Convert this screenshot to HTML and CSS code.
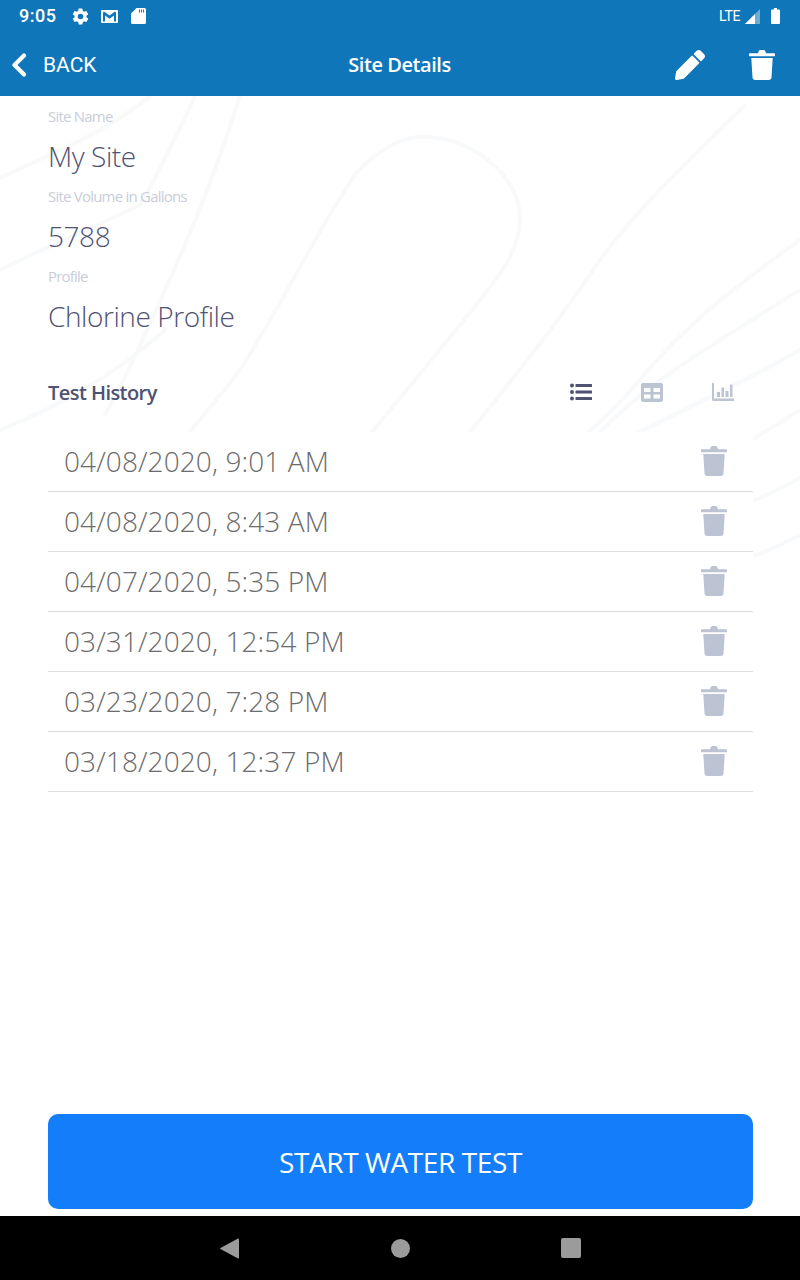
FILE: index.html
```html
<!DOCTYPE html>
<html lang="en">
<head>
<meta charset="utf-8">
<title>Site Details</title>
<link rel="stylesheet" href="styles.css">
</head>
<body>
<svg width="0" height="0" class="defs">
  <symbol id="trash" viewBox="0 0 26 30"><path d="M9 3.2 9.6 1.4C9.9.6 10.6 0 11.5 0h3c.9 0 1.600.6 1.900 1.400L17 3.200h8c.6 0 1 .4 1 1v1.400c0 .4-.3.700-.7.700H.7c-.4 0-.7-.3-.7-.7V4.200c0-.6.400-1 1-1zM2.300 8h21.400l-1.200 19.600c-.1 1.300-1.200 2.400-2.500 2.400H6c-1.300 0-2.400-1.100-2.500-2.400z"/></symbol>
</svg>
<div class="screen">
  <header class="top">
    <div class="status">
      <span class="time">9:05</span>
      <svg class="st-gear" viewBox="0 0 24 24"><path d="M19.400 13c.05-.33.100-.66.100-1s-.05-.67-.100-1l2.100-1.650c.2-.15.250-.42.120-.64l-2-3.460c-.12-.22-.39-.3-.61-.22l-2.490 1c-.52-.4-1.080-.73-1.690-.98l-.38-2.650A.49.490 0 0 0 14 2h-4c-.25 0-.46.180-.49.420l-.38 2.650c-.61.250-1.170.590-1.690.980l-2.490-1c-.23-.09-.49 0-.61.220l-2 3.460c-.13.220-.07.490.12.640L4.600 11c-.05.330-.100.670-.100 1s.05.670.100 1l-2.100 1.650c-.2.150-.25.420-.12.640l2 3.460c.12.220.39.300.61.220l2.490-1c.52.400 1.080.730 1.690.980l.38 2.650c.03.240.24.420.49.420h4c.25 0 .46-.18.49-.42l.38-2.650c.61-.25 1.170-.59 1.690-.98l2.490 1c.23.090.49 0 .61-.22l2-3.460c.12-.22.070-.49-.12-.64zM12 15.500a3.500 3.500 0 1 1 0-7 3.500 3.500 0 0 1 0 7z"/></svg>
      <svg class="st-mail" viewBox="0 0 17 13"><path fill-rule="evenodd" d="M1 0h15a1 1 0 0 1 1 1v11a1 1 0 0 1-1 1H1a1 1 0 0 1-1-1V1a1 1 0 0 1 1-1zm1 2.500V11.500h2V5.500l4.500 3.200 4.500-3.200v6h2V2.500l-1-1-5.500 4-5.500-4z"/></svg>
      <svg class="st-sd" viewBox="0 0 15 16"><path fill-rule="evenodd" d="M5.500 0H13.500A1.500 1.500 0 0 1 15 1.500v13a1.500 1.500 0 0 1-1.500 1.500h-12A1.500 1.500 0 0 1 0 14.500V5.500zM8 1.500v3h1v-3zm2 0v3h1v-3zm2 0v3h1v-3z"/></svg>
      <span class="st-fill"></span>
      <span class="lte">LTE</span>
      <svg class="st-signal" viewBox="0 0 15 15"><path class="dim" d="M15 0v15H0z"/><path d="M10 5v10H0z"/></svg>
      <svg class="st-batt" viewBox="0 0 9 16"><path d="M3 0h3v1.500h2a1 1 0 0 1 1 1V15a1 1 0 0 1-1 1H1a1 1 0 0 1-1-1V2.500a1 1 0 0 1 1-1h2z"/></svg>
    </div>
    <div class="appbar">
      <div class="back">
        <svg class="chev" viewBox="0 0 16 24"><path d="M13 2.500 3.500 12l9.500 9.500" fill="none" stroke="#fff" stroke-width="4.200" stroke-linecap="round" stroke-linejoin="round"/></svg>
        <span class="back-text">BACK</span>
      </div>
      <h1 class="title">Site Details</h1>
      <div class="actions">
        <svg class="pencil" viewBox="0 0 512 512"><path d="M497.900 142.100l-46.100 46.100c-4.700 4.700-12.300 4.700-17 0l-111-111c-4.700-4.700-4.700-12.300 0-17l46.100-46.100c18.700-18.700 49.100-18.700 67.900 0l60.100 60.100c18.800 18.700 18.800 49.100 0 67.900zM284.200 99.800L21.600 362.400.4 483.900c-2.900 16.400 11.400 30.600 27.800 27.800l121.500-21.300 262.600-262.600c4.700-4.700 4.700-12.300 0-17l-111-111c-4.800-4.700-12.400-4.700-17.100 0z"/></svg>
        <svg class="trash-white"><use href="#trash"/></svg>
      </div>
    </div>
  </header>

  <main class="content">
    <svg class="bg-lines" viewBox="0 0 800 1216" fill="none">
      <g stroke="#f8f9fa" stroke-width="4" stroke-linecap="round">
        <path d="M357 172C390 140 410 135 430 137C480 142 520 180 520 218C520 250 500 275 480 300C420 375 390 410 340 470"/>
        <path d="M357 172C320 225 290 290 255 345C240 375 215 400 190 432"/>
        <path d="M240 96C220 160 195 225 165 290C145 335 125 380 105 415"/>
        <path d="M195 96C175 140 160 170 140 205C100 225 50 245 0 270"/>
        <path d="M150 96C110 130 60 150 0 178"/>
        <path d="M745 105C690 160 640 205 600 260C560 320 520 370 470 432"/>
        <path d="M800 240C730 290 680 330 640 380C610 415 590 430 570 450"/>
        <path d="M800 290C720 340 650 380 600 432"/>
        <path d="M800 350C730 390 660 420 625 440"/>
        <path d="M800 410C785 420 770 428 755 438"/>
        <path d="M800 478C785 486 770 494 755 500"/>
        <path d="M800 535C785 543 770 550 755 556"/>
        <path d="M165 330C110 380 50 410 0 430"/>
      </g>
    </svg>
    <section class="fields">
      <div class="field"><div class="label">Site Name</div><div class="value">My Site</div></div>
      <div class="field"><div class="label">Site Volume in Gallons</div><div class="value">5788</div></div>
      <div class="field"><div class="label">Profile</div><div class="value">Chlorine Profile</div></div>
    </section>
    <div class="history-head">
      <h2 class="history-title">Test History</h2>
      <div class="views">
        <svg class="view view-active" viewBox="0 0 22 18"><circle cx="2" cy="2.500" r="2"/><circle cx="2" cy="9" r="2"/><circle cx="2" cy="15.500" r="2"/><rect x="5.500" y="1" width="16.500" height="3" rx=".5"/><rect x="5.500" y="7.500" width="16.500" height="3" rx=".5"/><rect x="5.500" y="14" width="16.500" height="3" rx=".5"/></svg>
        <svg class="view view-grid" viewBox="0 0 22 19"><path fill-rule="evenodd" d="M2 0h18a2 2 0 0 1 2 2v15a2 2 0 0 1-2 2H2a2 2 0 0 1-2-2V2a2 2 0 0 1 2-2zm1 5v4h6.500V5zm9.500 0v4H19V5zM3 11.500v4h6.500v-4zm9.500 0v4H19v-4z"/></svg>
        <svg class="view" viewBox="0 0 22 18"><path d="M0 0h2v15.500h20V18H1.500A1.500 1.500 0 0 1 0 16.500zM5 9h3v5H5zM9.500 4.500h2.500v9.500H9.500zM13.500 8h3v6h-3zM18 1.500h2.500v12.500H18z"/></svg>
      </div>
    </div>
    <ul class="tests">
      <li class="test"><span>04/08/2020, 9:01 AM</span><svg class="trash-grey"><use href="#trash"/></svg></li>
      <li class="test"><span>04/08/2020, 8:43 AM</span><svg class="trash-grey"><use href="#trash"/></svg></li>
      <li class="test"><span>04/07/2020, 5:35 PM</span><svg class="trash-grey"><use href="#trash"/></svg></li>
      <li class="test"><span>03/31/2020, 12:54 PM</span><svg class="trash-grey"><use href="#trash"/></svg></li>
      <li class="test"><span>03/23/2020, 7:28 PM</span><svg class="trash-grey"><use href="#trash"/></svg></li>
      <li class="test"><span>03/18/2020, 12:37 PM</span><svg class="trash-grey"><use href="#trash"/></svg></li>
    </ul>
    <button class="start" type="button">START WATER TEST</button>
  </main>

  <nav class="nav">
    <svg class="nav-back" viewBox="0 0 19 21"><path d="M18 0.500A1 1 0 0 1 19 1.500V19.500A1 1 0 0 1 18 20.500L0.500 11A.6.6 0 0 1 .5 10z"/></svg>
    <span class="nav-home"></span>
    <span class="nav-recent"></span>
  </nav>
</div>
</body>
</html>
```
FILE: styles.css
```css
* { box-sizing: border-box; }
html, body { margin: 0; padding: 0; }
body { background: #fff; font-family: "Open Sans", sans-serif; }
.defs { position: absolute; }
.screen { width: 800px; height: 1280px; display: flex; flex-direction: column; overflow: hidden; }

.top { background: #1076ba; color: #fff; fill: #fff; height: 96px; flex: none; }
.status { height: 36px; display: flex; align-items: center; padding: 0 20px 4px 19px; }
.time { font: 500 18px/1 Roboto, sans-serif; width: 53px; letter-spacing: .5px; }
.st-gear { width: 19px; height: 19px; margin-right: 11px; margin-left: -1px; }
.st-mail { width: 17px; height: 13px; margin-right: 13px; }
.st-sd { width: 15px; height: 16px; }
.st-fill { flex: 1; }
.lte { font: 400 14px/1 Roboto, sans-serif; width: 26px; letter-spacing: -.2px; }
.st-signal { width: 15px; height: 15px; margin-right: 11px; margin-top: 1px; }
.st-signal .dim { opacity: .4; }
.st-batt { width: 9px; height: 16px; }

.appbar { height: 60px; display: grid; grid-template-columns: 1fr auto 1fr; align-items: center; padding: 0 25px 3px; }
.back { display: flex; align-items: center; gap: 16px; font: 400 21px/1 Roboto, sans-serif; margin-left: -14px; }
.back-text { padding-top: 2px; }
.chev { width: 16px; height: 24px; }
.title { margin: 0 1px 0 0; font: 600 20px/1 "Open Sans", sans-serif; letter-spacing: -.45px; }
.actions { display: flex; justify-content: flex-end; align-items: center; gap: 44px; }
.pencil { width: 30px; height: 30px; }
.trash-white { width: 26px; height: 30px; fill: #fff; }

.content { flex: 1; position: relative; overflow: hidden; display: flex; flex-direction: column; padding: 0 47px 7px 48px; }
.bg-lines { position: absolute; left: 0; top: -96px; width: 800px; height: 1216px; }
.fields, .history-head, .tests, .start { position: relative; }
.field { height: 80px; }
.label { height: 40px; line-height: 40px; font-size: 15px; color: #c9cdda; letter-spacing: -.78px; }
.value { height: 40px; line-height: 40px; font-size: 28px; color: #4f5272; font-weight: 300; letter-spacing: -.42px; }

.history-head { display: flex; justify-content: space-between; align-items: center; height: 40px; margin-top: 37px; }
.history-title { margin: 0; font: 600 20px/40px "Open Sans", sans-serif; color: #4f5272; letter-spacing: -.55px; }
.views { display: flex; gap: 49px; fill: #bcc3d2; padding-right: 19px; margin-top: -2px; }
.view { width: 22px; height: 18px; }
.view-grid { height: 19px; }
.view-active { fill: #4f5272; }

.tests { list-style: none; margin: 19px 0 0; padding: 0; background: #fff; flex: 1; }
.test { height: 60px; display: flex; justify-content: space-between; align-items: center; padding: 0 26px 2px 16px; border-bottom: 1px solid #dedede; font-size: 28px; font-weight: 300; color: #6c6c6c; letter-spacing: .1px; }
.trash-grey { width: 26px; height: 30px; fill: #bcc3d2; }

.start { height: 95px; border: 0; border-radius: 10px; background: #147dfa; color: #fff; font: 400 28px/1 "Open Sans", sans-serif; letter-spacing: -.4px; flex: none; }

.nav { height: 64px; flex: none; background: #000; position: relative; display: flex; align-items: center; }
.nav-back { width: 19px; height: 21px; fill: #9b9b9b; margin-left: 220px; }
.nav-home { width: 19px; height: 19px; border-radius: 50%; background: #9b9b9b; margin-left: 152px; }
.nav-recent { width: 20px; height: 20px; border-radius: 2px; background: #9b9b9b; margin-left: 151px; }
```
